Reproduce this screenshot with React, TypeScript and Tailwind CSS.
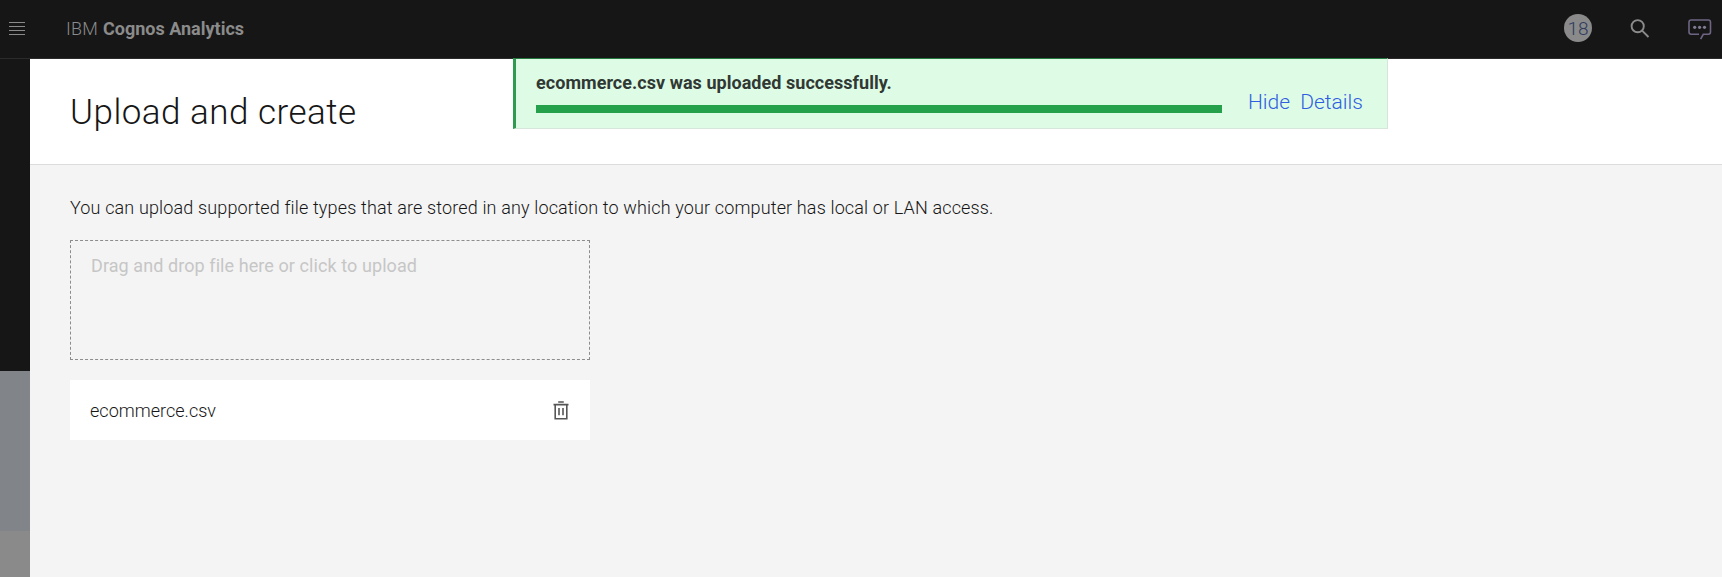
import React from "react";

function MenuIcon() {
  return (
    <svg width="16" height="13" viewBox="0 0 16 13" fill="#8a8a8a" aria-hidden="true">
      <rect width="16" height="1" />
      <rect y="4" width="16" height="1" />
      <rect y="8" width="16" height="1" />
      <rect y="12" width="16" height="1" />
    </svg>
  );
}

function SearchIcon() {
  return (
    <svg width="20" height="20" viewBox="0 0 20 20" fill="none" stroke="#8b8b8b" strokeWidth="1.9" aria-hidden="true">
      <circle cx="7.7" cy="7.2" r="6.1" />
      <path d="M12.1 11.6 L18.5 18" />
    </svg>
  );
}

function ChatIcon() {
  return (
    <svg width="24" height="22" viewBox="0 0 24 22" fill="none" stroke="#6f6582" strokeWidth="1.6" aria-hidden="true">
      <path d="M11 15.3H3.2Q1 15.3 1 13.1V3.2Q1 1 3.2 1H20.3Q22.5 1 22.5 3.2V13.1Q22.5 15.3 20.3 15.3H15.3L12.6 20.2" />
      <g fill="#837b93" stroke="none">
        <circle cx="6.7" cy="8.3" r="1.6" />
        <circle cx="11.6" cy="8.3" r="1.6" />
        <circle cx="16.5" cy="8.3" r="1.6" />
      </g>
    </svg>
  );
}

function TrashIcon() {
  return (
    <svg width="16" height="19" viewBox="0 0 16 19" fill="none" stroke="#565656" strokeWidth="1.6" aria-hidden="true">
      <path d="M5.2 1H10.8M0.5 3.6H15.5M2.2 3.6V17.7H13.8V3.6M6 7V14.3M10 7V14.3" />
    </svg>
  );
}

export default function App() {
  return (
    <div className="relative flex h-[577px] w-full flex-col overflow-hidden bg-[#f4f4f4] font-['Roboto',sans-serif] font-light text-[#161616]">
      <header className="flex h-[59px] shrink-0 items-center border-b border-[#2b2b2b] bg-[#161616] pb-0.5 pl-[9px] pr-[10px]">
        <MenuIcon />
        <div className="ml-[41px] flex gap-[5px] whitespace-nowrap pt-0.5 text-[18px] leading-6 text-[#8b8b8b]">
          <span className="tracking-[0.2px]">IBM</span>
          <span className="font-bold">Cognos Analytics</span>
        </div>
        <div className="ml-auto flex items-center">
          <span className="flex size-7 items-center justify-center rounded-full bg-[#8a8a8a] text-[19px] font-light leading-none text-[#2c3b5e]">18</span>
          <span className="ml-[38px] mt-0.5"><SearchIcon /></span>
          <span className="ml-[38px] mt-1"><ChatIcon /></span>
        </div>
      </header>

      <div className="flex min-h-0 flex-1">
        <aside className="flex w-[30px] shrink-0 flex-col">
          <div className="h-[312px] bg-[#161616]" />
          <div className="h-[160px] bg-[#818589]" />
          <div className="flex-1 bg-[#8a8a8a]" />
        </aside>

        <main className="min-w-0 flex-1">
          <div className="flex h-[106px] items-center border-b border-[#dcdcdc] bg-white pl-10 pt-0.5">
            <h1 className="whitespace-nowrap text-[35px] font-light leading-[42px] tracking-[0.48px]">Upload and create</h1>
          </div>

          <section className="pl-10 pt-[31px]">
            <p className="whitespace-nowrap text-[18px] leading-6 tracking-[0.143px]">
              You can upload supported file types that are stored in any location to which your computer has local or LAN access.
            </p>
            <div className="mt-5 h-[120px] w-[520px] border border-dashed border-[#8d8d8d] pl-5 pt-[13px]">
              <span className="text-[18px] font-normal leading-6 tracking-[0.08px] text-[#c6c6c6]">Drag and drop file here or click to upload</span>
            </div>
            <div className="mt-5 flex h-[60px] w-[520px] items-center justify-between bg-white pl-5 pr-[21px]">
              <span className="pt-0.5 text-[18px] leading-6 tracking-[0.02px]">ecommerce.csv</span>
              <TrashIcon />
            </div>
          </section>
        </main>
      </div>

      <div className="absolute left-[513px] top-[58px] flex h-[71px] w-[875px] border border-l-[3px] border-[#d6e6da] border-l-[#2f9a50] border-t-[#22783d] bg-[#defbe6]">
        <div className="ml-5 w-[686px] pt-3">
          <p className="whitespace-nowrap text-[18px] font-bold leading-6 tracking-[0.04px] text-[#303833]">ecommerce.csv was uploaded successfully.</p>
          <div className="mt-[10px] h-2 bg-[#25a04b]" />
        </div>
        <div className="ml-[26px] flex gap-[10px] pt-[31px] text-[21px] leading-6 text-[#2f5fe0]">
          <span>Hide</span>
          <span>Details</span>
        </div>
      </div>
    </div>
  );
}
